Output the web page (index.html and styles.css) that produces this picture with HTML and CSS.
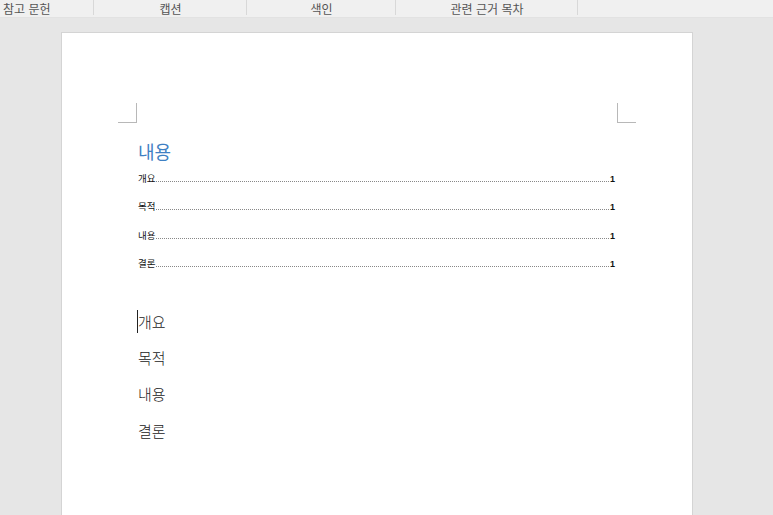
FILE: index.html
```html
<!DOCTYPE html>
<html lang="ko">
<head>
<meta charset="utf-8">
<link rel="stylesheet" href="styles.css">
</head>
<body>
<div class="ribbon">
  <div class="cell first">참고 문헌</div>
  <div class="cell w153">캡션</div>
  <div class="cell w149">색인</div>
  <div class="cell w182">관련 근거 목차</div>
  <div class="cell rest"></div>
</div>
<div class="canvas">
  <div class="page">
    <div class="corners">
      <div class="corner left"></div>
      <div class="corner right"></div>
    </div>
    <div class="content">
      <div class="toc-title">내용</div>
      <div class="toc">
        <div class="toc-row"><span class="toc-text">개요</span><span class="leader"></span><span class="num">1</span></div>
        <div class="toc-row"><span class="toc-text">목적</span><span class="leader"></span><span class="num">1</span></div>
        <div class="toc-row"><span class="toc-text">내용</span><span class="leader"></span><span class="num">1</span></div>
        <div class="toc-row"><span class="toc-text">결론</span><span class="leader"></span><span class="num">1</span></div>
      </div>
      <div class="headings">
        <div class="h"><span class="caret"></span>개요</div>
        <div class="h">목적</div>
        <div class="h">내용</div>
        <div class="h">결론</div>
      </div>
    </div>
  </div>
</div>
</body>
</html>
```
FILE: styles.css
```css
html, body {
  margin: 0;
  padding: 0;
  height: 100%;
  overflow: hidden;
}
body {
  background: #e6e6e6;
  font-family: "Noto Sans CJK KR", "Noto Sans", sans-serif;
  color: #222;
}
.ribbon {
  display: flex;
  height: 17px;
  background: #f0f0f0;
  border-bottom: 1px solid #e2e2e2;
  font-size: 12px;
  color: #555;
  line-height: 17px;
}
.cell {
  position: relative;
  text-align: center;
  white-space: nowrap;
}
.cell::after {
  content: "";
  position: absolute;
  right: 0;
  top: 0;
  height: 15px;
  width: 1px;
  background: #d8d8d8;
}
.cell.rest::after { display: none; }
.first { width: 94px; text-align: left; padding-left: 3px; box-sizing: border-box; }
.w153 { width: 153px; }
.w149 { width: 149px; }
.w182 { width: 182px; }
.rest { flex: 1; }
.canvas {
  padding-top: 14px;
  padding-left: 61px;
}
.page {
  width: 630px;
  height: 412px;
  background: #fff;
  border: 1px solid #d4d4d4;
  border-bottom: none;
  padding-top: 70px;
}
.corners {
  display: flex;
  justify-content: space-between;
  padding: 0 56px 0 56px;
}
.corner {
  width: 18px;
  height: 19px;
  border-bottom: 1px solid #b8b8b8;
}
.corner.left { border-right: 1px solid #b8b8b8; }
.corner.right { border-left: 1px solid #b8b8b8; }
.content {
  padding: 16px 77px 0 76px;
}
.toc-title {
  font-size: 18px;
  line-height: 24px;
  color: #3f80c3;
  margin-bottom: 6px;
}
.toc-row {
  display: flex;
  align-items: baseline;
  height: 28.4px;
  line-height: 18px;
  font-size: 9.5px;
  color: #111;
}
.leader {
  flex: 1;
  border-bottom: 1px dotted #888;
  margin: 0 1px 0 1px;
}
.num {
  font-family: "Liberation Sans", sans-serif;
  font-weight: bold;
  font-size: 9px;
}
.headings {
  margin-top: 28px;
}
.h {
  position: relative;
  font-size: 15px;
  font-weight: 300;
  line-height: 22px;
  height: 36.4px;
  color: #222;
}
.caret {
  position: absolute;
  left: -1px;
  top: -1px;
  width: 1px;
  height: 23px;
  background: #222;
}
```
